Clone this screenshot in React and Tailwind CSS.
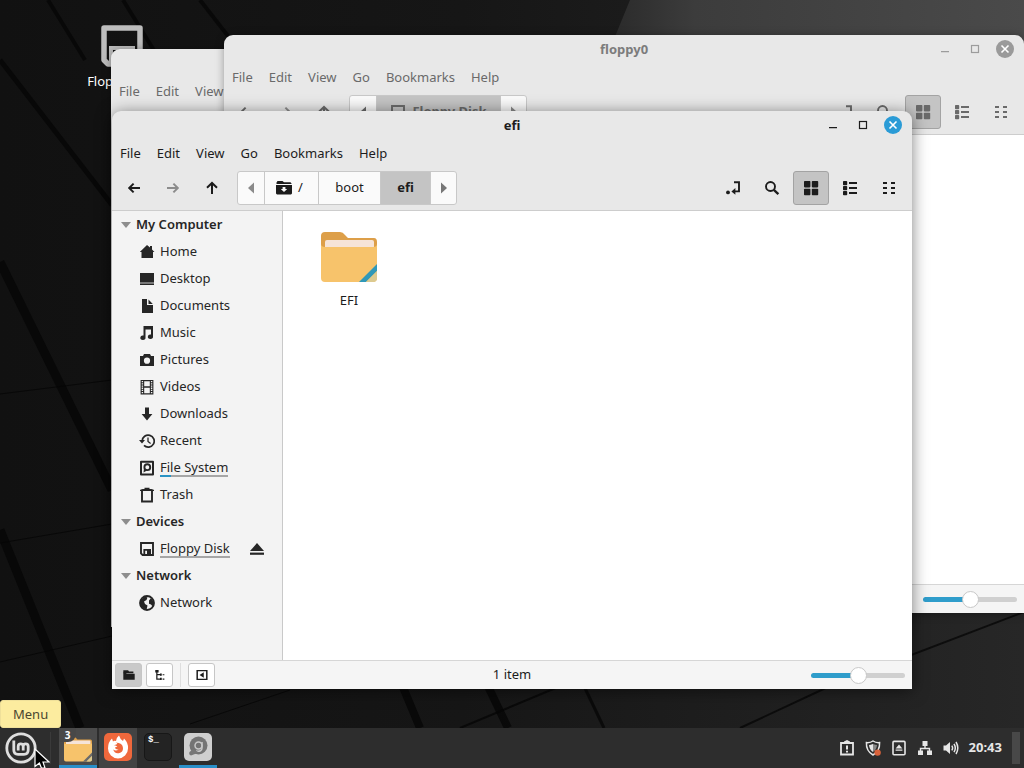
import React from "react";

const SvgIcon = ({ children, className = "h-4 w-4" }) => (
  <svg viewBox="0 0 16 16" className={className} fill="currentColor" aria-hidden="true">
    {children}
  </svg>
);

const stroke = { fill: "none", stroke: "currentColor", strokeWidth: 2 };

const icons = {
  home: <path d="M8 1 L0.8 8 H2.5 V14 H14 V8 H15.5 L13 5.4 V2 H11 V3.6 Z" />,
  desktop: (
    <>
      <path d="M1 2 H15 V11.6 H1 Z" />
      <path d="M1 12.4 H15 V14 H1 Z" />
    </>
  ),
  document: <path d="M3 1 H8 V7 H14 V15 H3 Z M9.5 1.5 L13.8 6 H9.5 Z" />,
  music: (
    <path d="M4.5 1 H14 V11.5 A2.6 2.2 0 1 1 12 9.6 V4.5 H6.5 V12.5 A2.6 2.2 0 1 1 4.5 10.6 Z" />
  ),
  pictures: (
    <path
      fillRule="evenodd"
      d="M5 2 H11 L12 4 H15 V14 H1 V4 H4 Z M8 5.6 A3.1 3.1 0 1 0 8 11.8 A3.1 3.1 0 1 0 8 5.6 Z"
    />
  ),
  videos: (
    <>
      <path fillRule="evenodd" d="M1.6 1 H14.4 V15.5 H1.6 Z M5.2 2.2 V7.3 H10.8 V2.2 Z M5.2 8.7 V14.2 H10.8 V8.7 Z" />
      <path d="M3.4 2 V15 M12.6 2 V15" fill="none" stroke="#f3f3f3" strokeWidth="1.4" strokeDasharray="1.3 .9" />
    </>
  ),
  downloads: <path d="M6 1.5 H10 V8 H13.4 L8 14.5 L2.6 8 H6 Z" />,
  recent: (
    <>
      <path d="M3.2 8 A6 6 0 1 1 5 12.4" {...stroke} strokeWidth="1.7" />
      <path d="M0 7 H6 L3 10.6 Z" />
      <path d="M9 4.5 V8.4 L11.6 10.4" {...stroke} strokeWidth="1.3" />
    </>
  ),
  filesystem: (
    <>
      <path d="M2 1.8 H14 V14.6 H2 Z" {...stroke} strokeLinejoin="round" />
      <circle cx="8.3" cy="7.2" r="2.9" {...stroke} strokeWidth="1.9" />
      <path d="M4.5 12.5 L5 8.5 L8 10.5 Z" />
    </>
  ),
  trash: (
    <>
      <path d="M1 3 C2.5 1.2 13.5 1.2 15 3 V4 H1 Z M5.5 0.8 H10.5 V2.4 H5.5 Z" />
      <path d="M3 4 V14.5 H13 V4" {...stroke} strokeWidth="1.9" />
    </>
  ),
  floppy: (
    <>
      <path d="M2 2 H14 V14 H3.6 L2 12.4 Z" {...stroke} strokeWidth="1.9" />
      <path fillRule="evenodd" d="M4.4 8 H12 V14 H4.4 Z M6.2 9.8 V13 H8 V9.8 Z" />
    </>
  ),
  network: (
    <>
      <circle cx="8" cy="8" r="7" {...stroke} strokeWidth="1.8" />
      <path d="M2 5 L6 1.5 L8.5 2.5 L7.5 5 L5 6.5 L6 9 L8.5 10.5 L7.5 15 L3.5 13 L1 9 Z" />
      <path d="M10 5.5 L12 3 L15 7 L13.6 11.5 L12 9.5 L10 8.8 Z" />
    </>
  ),
  eject: (
    <>
      <path d="M8 2 L15 10 H1 Z" />
      <path d="M1 11.6 H15 V13.8 H1 Z" />
    </>
  ),
  arrowLeft: <path d="M14 8 H3.2 M7.6 3.6 L3.2 8 L7.6 12.4" {...stroke} />,
  arrowRight: <path d="M2 8 H12.8 M8.4 3.6 L12.8 8 L8.4 12.4" {...stroke} />,
  arrowUp: <path d="M8 14 V3.2 M3 7.8 L8 3 L13 7.8" {...stroke} />,
  rootFolder: (
    <path
      fillRule="evenodd"
      d="M0.5 2.5 L1.5 1 H6.5 L8 2.2 H14.5 L15.5 3.4 V4 H0.5 Z M0 5 H16 V13.5 L15 14.5 H1 L0 13.5 Z M6.6 7 V9 H4.8 L8 12 L11.2 9 H9.4 V7 Z"
    />
  ),
  location: (
    <>
      <path d="M9 2.2 H14 V11.4 H9" {...stroke} strokeWidth="1.9" />
      <path d="M10.4 8 L6.4 11.4 L10.4 14.8 Z" />
      <circle cx="3" cy="12.4" r="1.9" />
    </>
  ),
  search: (
    <>
      <circle cx="6.5" cy="6.5" r="4.5" {...stroke} strokeWidth="1.9" />
      <path d="M9.8 9.8 L14.4 14.2" {...stroke} strokeWidth="2.3" />
    </>
  ),
  grid: (
    <>
      <rect x="1" y="1" width="6.4" height="6.4" rx=".8" />
      <rect x="8.8" y="1" width="6.4" height="6.4" rx=".8" />
      <rect x="1" y="8.8" width="6.4" height="6.4" rx=".8" />
      <rect x="8.8" y="8.8" width="6.4" height="6.4" rx=".8" />
    </>
  ),
  list: (
    <>
      <rect x="1" y="1" width="4.2" height="4.2" rx=".8" />
      <rect x="1" y="6" width="4.2" height="4.2" rx=".8" />
      <rect x="1" y="11" width="4.2" height="4.2" rx=".8" />
      <path d="M7 2 H15 V4 H7 Z M7 7 H15 V9 H7 Z M7 12 H15 V14 H7 Z" />
    </>
  ),
  compact: (
    <path d="M2 2 H6 V4 H2 Z M2 7 H6 V9 H2 Z M2 12 H6 V14 H2 Z M10 2 H14 V4 H10 Z M10 7 H14 V9 H10 Z M10 12 H14 V14 H10 Z" />
  ),
  triLeft: <path d="M11 2.5 V13.5 L5 8 Z" />,
  triRight: <path d="M5 2.5 V13.5 L11 8 Z" />,
  places: (
    <>
      <path d="M1.5 2.5 H7 L8 4 H13 V6 H1.5 Z" />
      <path d="M1.5 5 H5 V6.6 H14.5 V13.5 H1.5 Z" />
    </>
  ),
  tree: (
    <>
      <path d="M4.4 2.5 V12.6 H9 M4.4 7.6 H9" {...stroke} strokeWidth="1.4" />
      <path d="M2.6 2.4 H6.4 V5 H2.6 Z M8 6.4 H10 V8.8 H8 Z M11 7 H13 V8.4 H11 Z M8 11.2 H10 V13.8 H8 Z M11 12 H13 V13.4 H11 Z" />
    </>
  ),
  hideSide: (
    <>
      <path d="M2.5 3 H13.5 V13 H2.5 Z" {...stroke} strokeWidth="1.7" />
      <path d="M5.2 8 L10 4.8 V11.2 Z" />
    </>
  ),
};

const Icon = ({ name, className }) => <SvgIcon className={className}>{icons[name]}</SvgIcon>;

const MENUS = ["File", "Edit", "View", "Go", "Bookmarks", "Help"];

const PLACES = [
  {
    title: "My Computer",
    items: [
      { icon: "home", label: "Home" },
      { icon: "desktop", label: "Desktop" },
      { icon: "document", label: "Documents" },
      { icon: "music", label: "Music" },
      { icon: "pictures", label: "Pictures" },
      { icon: "videos", label: "Videos" },
      { icon: "downloads", label: "Downloads" },
      { icon: "recent", label: "Recent" },
      { icon: "filesystem", label: "File System", usage: true },
      { icon: "trash", label: "Trash" },
    ],
  },
  {
    title: "Devices",
    items: [{ icon: "floppy", label: "Floppy Disk", mounted: true }],
  },
  { title: "Network", items: [{ icon: "network", label: "Network" }] },
];

function ToolButton({ icon, label, pressed, muted }) {
  return (
    <button
      type="button"
      aria-label={label}
      className={`flex h-[34px] w-9 items-center justify-center rounded-[3px] border ${
        pressed ? "border-[#a3a3a3] bg-[#c4c4c4]" : "border-transparent"
      } ${muted ? "text-[#8c8c8c]" : ""}`}
    >
      <Icon name={icon} />
    </button>
  );
}

function TitleBar({ title, active }) {
  return (
    <header className="grid h-7 grid-cols-[1fr_auto_1fr] items-center px-[10px]">
      <h2 className={`col-start-2 text-[13px] leading-5 font-bold ${active ? "" : "text-[#7c7c7c]"}`}>{title}</h2>
      <div className={`col-start-3 flex items-center justify-end gap-3 ${active ? "" : "text-[#9c9c9c]"}`}>
        <button type="button" aria-label="Minimize" className="flex h-[18px] w-[18px] items-center justify-center">
          <SvgIcon>
            <path d="M4 10 H12 V11.2 H4 Z" />
          </SvgIcon>
        </button>
        <button type="button" aria-label="Maximize" className="flex h-[18px] w-[18px] items-center justify-center">
          <SvgIcon>
            <rect x="4.5" y="4.5" width="7" height="7" fill="none" stroke="currentColor" strokeWidth="1.2" />
          </SvgIcon>
        </button>
        <button
          type="button"
          aria-label="Close"
          className={`flex h-[18px] w-[18px] items-center justify-center rounded-full text-white ${
            active ? "bg-[#2a9bd6]" : "bg-[#9a9a9a]"
          }`}
        >
          <SvgIcon>
            <path d="M4.5 4.5 L11.5 11.5 M11.5 4.5 L4.5 11.5" fill="none" stroke="currentColor" strokeWidth="1.6" />
          </SvgIcon>
        </button>
      </div>
    </header>
  );
}

function MenuBar({ menus }) {
  return (
    <nav className="flex h-7 items-center gap-4 px-2">
      {menus.map((m) => (
        <button key={m} type="button" className="text-[13px] leading-5">
          {m}
        </button>
      ))}
    </nav>
  );
}

function ToolBar({ children }) {
  return (
    <div className="flex h-11 items-center border-b border-[#cdcdcd] pr-[5px] pb-px pl-1">
      <div className="flex gap-[3px]">
        <ToolButton icon="arrowLeft" label="Back" />
        <ToolButton icon="arrowRight" label="Forward" muted />
        <ToolButton icon="arrowUp" label="Up" />
      </div>
      <div className="ml-[7px] flex h-[34px] divide-x divide-[#c8c8c8] overflow-hidden rounded-[3px] border border-[#c8c8c8] bg-[#fafafa] text-[13px]">
        {children}
      </div>
      <div className="ml-auto flex gap-[3px]">
        <ToolButton icon="location" label="Toggle location entry" />
        <ToolButton icon="search" label="Search" />
        <ToolButton icon="grid" label="Icon view" pressed />
        <ToolButton icon="list" label="List view" />
        <ToolButton icon="compact" label="Compact view" />
      </div>
    </div>
  );
}

function Crumb({ label, className = "", current, children }) {
  return (
    <button
      type="button"
      aria-label={label}
      className={`flex items-center justify-center gap-[6px] ${current ? "bg-[#c4c4c4] font-bold" : ""} ${className}`}
    >
      {children}
    </button>
  );
}

function Sidebar() {
  return (
    <aside className="w-[171px] shrink-0 border-r border-[#c9c9c9] bg-[#f3f3f3] text-[13px] leading-[19px] text-[#262626]">
      {PLACES.map((group) => (
        <section key={group.title}>
          <h3 className="flex h-[27px] items-center gap-1 pl-2 font-semibold">
            <svg viewBox="0 0 12 12" className="h-3 w-3 text-[#8d8d8d]" fill="currentColor" aria-hidden="true">
              <path d="M1 3 H11 L6 9 Z" />
            </svg>
            {group.title}
          </h3>
          <ul>
            {group.items.map((item) => (
              <li key={item.label} className="flex h-[27px] items-center justify-between pr-[17px] pl-[27px]">
                <button type="button" className="flex items-center gap-[5px]">
                  <Icon name={item.icon} />
                  <span className="flex flex-col">
                    <span className={item.usage || item.mounted ? "leading-4" : "leading-[19px]"}>{item.label}</span>
                    {item.usage && (
                      <span className="flex h-[2px] bg-[#a6a6a6]">
                        <span className="w-[11px] bg-[#2a93c4]" />
                      </span>
                    )}
                    {item.mounted && <span className="h-[2px] bg-[#a6a6a6]" />}
                  </span>
                </button>
                {item.mounted && (
                  <button type="button" aria-label="Eject">
                    <Icon name="eject" />
                  </button>
                )}
              </li>
            ))}
          </ul>
        </section>
      ))}
    </aside>
  );
}

function ZoomSlider() {
  return (
    <input
      type="range"
      aria-label="Zoom"
      defaultValue="50"
      className="h-[18px] w-[94px] cursor-pointer appearance-none bg-transparent [&::-webkit-slider-runnable-track]:h-[5px] [&::-webkit-slider-runnable-track]:rounded-full [&::-webkit-slider-runnable-track]:bg-[linear-gradient(90deg,#2f9dcb_50%,#d0d0d0_50%)] [&::-webkit-slider-thumb]:mt-[-6px] [&::-webkit-slider-thumb]:h-[17px] [&::-webkit-slider-thumb]:w-[17px] [&::-webkit-slider-thumb]:appearance-none [&::-webkit-slider-thumb]:rounded-full [&::-webkit-slider-thumb]:border [&::-webkit-slider-thumb]:border-[#c8c8c8] [&::-webkit-slider-thumb]:bg-white"
    />
  );
}

function StatusButton({ icon, label, pressed }) {
  return (
    <button
      type="button"
      aria-label={label}
      className={`flex h-6 w-[27px] items-center justify-center rounded-[3px] border border-[#c6c6c6] ${
        pressed ? "bg-[#c9c9c9]" : "bg-white"
      }`}
    >
      <Icon name={icon} className="h-[14px] w-[14px]" />
    </button>
  );
}

function Window({ title, active, className, menus = MENUS, crumbs, children }) {
  return (
    <section
      className={`absolute flex h-[578px] w-[800px] flex-col overflow-hidden rounded-t-[9px] bg-[#e8e8e8] ${
        active ? "text-[#1c1c1c] shadow-[0_2px_16px_rgba(0,0,0,0.5)]" : "text-[#6a6a6a] shadow-[0_1px_8px_rgba(0,0,0,0.35)]"
      } ${className}`}
    >
      <TitleBar title={title} active={active} />
      <MenuBar menus={menus} />
      {crumbs && <ToolBar>{crumbs}</ToolBar>}
      {children}
    </section>
  );
}

function Folder({ className, band = "#3098b8" }) {
  return (
    <svg viewBox="0 0 58 52" className={className} aria-hidden="true">
      <path d="M1 5 Q1 1 5 1 H20 Q23 1 25 4 L28 7 H54 Q57 7 57 11 V22 H1 Z" fill="#dd9f49" />
      <rect x="5" y="9" width="49" height="12" rx="2" fill="#f6e4d8" />
      <path d="M1 13 Q1 16 5 16 H53 Q57 16 57 13 V47 Q57 51 53 51 H5 Q1 51 1 47 Z" fill="#f7c36b" />
      <path d="M57 33 V40 L46 51 H39 Z" fill={band} />
      <path d="M57 40 V47 Q57 51 53 51 H46 Z" fill="#dcca90" />
    </svg>
  );
}

function Wallpaper() {
  return (
    <svg viewBox="0 0 1024 768" preserveAspectRatio="xMidYMid slice" className="absolute inset-0 h-full w-full" aria-hidden="true">
      <defs>
        <linearGradient id="base" x1="0" y1="0" x2="1" y2="0">
          <stop offset="0" stopColor="#111111" />
          <stop offset=".45" stopColor="#161616" />
          <stop offset="1" stopColor="#272727" />
        </linearGradient>
        <linearGradient id="beam" x1="0" y1="0" x2="1" y2="0">
          <stop offset="0" stopColor="#252525" />
          <stop offset=".25" stopColor="#3c3c3c" />
          <stop offset="1" stopColor="#4a4a4a" />
        </linearGradient>
      </defs>
      <rect width="1024" height="768" fill="url(#base)" />
      <path d="M630 0 H1024 V110 H585 Z" fill="url(#beam)" />
      <g stroke="#060606" strokeOpacity=".75" fill="none">
        <path d="M0 60 L112 205" strokeWidth="5" />
        <path d="M0 262 L112 490" strokeWidth="9" />
        <path d="M0 530 L80 728" strokeWidth="9" />
        <path d="M48 0 L85 60 M123 0 L155 52 M200 0 L228 36" strokeWidth="4" />
        <path d="M400 680 L420 728 M485 680 L508 728" strokeWidth="8" />
        <path d="M583 684 L604 728" strokeWidth="3" />
        <path d="M460 728 L570 682 M740 728 L830 686 L1024 612" strokeWidth="2" />
        <path d="M0 394 L112 380 M0 543 L112 524 M0 662 L112 636 M190 724 L290 690" strokeWidth="1" />
      </g>
    </svg>
  );
}

function TaskItem({ label, className = "", running, children }) {
  return (
    <button
      type="button"
      aria-label={label}
      className={`flex h-10 w-[38px] items-center justify-center border-b-[3px] ${
        running ? "border-[#2a8fc9]" : "border-transparent"
      } ${className}`}
    >
      {children}
    </button>
  );
}

function Taskbar() {
  return (
    <footer className="relative flex h-10 shrink-0 items-center bg-[#2d2d2d] text-white">
      <button type="button" aria-label="Menu" className="flex h-10 w-[42px] items-center justify-center">
        <svg viewBox="0 0 32 32" className="h-8 w-8" fill="none" stroke="#dedede" aria-hidden="true">
          <circle cx="16" cy="16" r="14.2" strokeWidth="2.8" />
          <path d="M8.8 8.5 V18 Q8.8 22.3 13 22.3 H19 Q23.2 22.3 23.2 18 V14.5 Q23.2 11.8 20.7 11.8 Q18.2 11.8 18.2 14.5 V18.5 M18.2 14.5 Q18.2 11.8 15.7 11.8 Q13.2 11.8 13.2 14.5 V18.5" strokeWidth="2.8" />
        </svg>
      </button>
      <span className="mr-2 ml-2 h-8 w-px bg-[#3a3a3a]" />
      <div className="flex gap-[2px]">
        <TaskItem label="Files" running className="relative bg-[#4b4b4b]">
          <Folder className="mt-1 h-[26px] w-[30px]" band="#6b6b6b" />
          <span className="absolute top-0 left-0 flex h-[14px] w-[17px] items-center justify-center rounded-br-lg bg-[#484848] text-[10px] leading-3 font-bold">
            3
          </span>
        </TaskItem>
        <TaskItem label="Firefox" className="bg-[#434343]">
          <svg viewBox="0 0 28 28" className="h-7 w-7" aria-hidden="true">
            <rect width="28" height="28" rx="5" fill="#f0683c" />
            <path d="M15 2.5 Q16 6 19 8 L20 5.5 Q24.5 10 24 15.5 A10 10 0 0 1 4 15.5 Q4 9 8 5.5 L9 8.5 Q10 7.5 12 8 Q12 5 15 2.5 Z" fill="#fff" />
            <path d="M9.6 12 Q12.6 12.4 13.4 10.6 Q12.6 9.6 11.6 9.4 Q18.8 9.6 19 15 A5 5 0 0 1 9.2 16.6 Q12 18.6 14.6 16.4 Q11.4 16.4 11 14.4 L13.4 13.4 Q11.4 12.4 9.6 12 Z" fill="#f0683c" />
          </svg>
        </TaskItem>
        <TaskItem label="Terminal">
          <span className="flex h-7 w-7 items-start rounded-[5px] border border-[#171717] bg-[#232323] px-[3px] font-['Liberation_Mono',monospace] text-[9px] leading-3 font-bold">
            $_
          </span>
        </TaskItem>
        <TaskItem label="Disks" running>
          <svg viewBox="0 0 28 28" className="h-7 w-7" aria-hidden="true">
            <rect width="28" height="28" rx="5" fill="#cfcfcf" />
            <circle cx="14.5" cy="12.5" r="9" fill="#747474" />
            <circle cx="14.5" cy="12.5" r="3.5" fill="none" stroke="#c8c8c8" strokeWidth="1.5" />
            <path d="M18 9 V15 Q18 19 12 18" fill="none" stroke="#c8c8c8" strokeWidth="1.5" />
            <path d="M5.5 19 L9 16 L15 19.5 L7 22.5 Q4.5 21.5 5.5 19 Z" fill="#777" />
          </svg>
        </TaskItem>
      </div>
      <div className="ml-auto flex h-10 items-center gap-[10px] pr-1 text-[#e6e6e6]">
        <button type="button" aria-label="Report">
          <SvgIcon>
            <path d="M2 3 H14 V14.5 H2 Z" {...stroke} strokeWidth="1.8" />
            <path d="M5 1.6 L8 0 L11 1.6 V4 H5 Z M7 5.5 H9 V9.6 H7 Z M7 10.8 H9 V12.6 H7 Z" />
          </SvgIcon>
        </button>
        <button type="button" aria-label="Updates">
          <SvgIcon>
            <path d="M8 1 Q11 3 14.6 2.6 Q15 11 8 15 Q1 11 1.4 2.6 Q5 3 8 1 Z" {...stroke} strokeWidth="1.5" />
            <path d="M8 4 Q5.5 5 4 5 Q4.3 9.6 8 12 Z" />
            <path d="M8 4 Q10.5 5 12 5 Q11.7 9.6 8 12 Z" fill="#888" />
            <circle cx="12.6" cy="12.6" r="3.2" fill="#d9633c" />
          </SvgIcon>
        </button>
        <button type="button" aria-label="Removable drives">
          <SvgIcon>
            <rect x="2" y="1.4" width="12" height="13.4" rx="1" {...stroke} strokeWidth="1.6" />
            <path d="M8 4.6 L11.4 8.4 H4.6 Z M4.6 9.4 H11.4 V10.8 H4.6 Z" />
          </SvgIcon>
        </button>
        <button type="button" aria-label="Network">
          <SvgIcon>
            <path d="M5.5 1 H10.5 V6 H5.5 Z M1 10.5 H6 V15 H1 Z M10 10.5 H15 V15 H10 Z" />
            <path d="M8 5 V8.5 M3.5 11 V8.5 H12.5 V11" {...stroke} strokeWidth="1.4" />
          </SvgIcon>
        </button>
        <button type="button" aria-label="Volume">
          <SvgIcon>
            <path d="M0.5 5.5 H3 L7 2 V14 L3 10.5 H0.5 Z" />
            <path d="M8.8 5.6 Q10.4 8 8.8 10.4 M11 3.8 Q13.6 8 11 12.2 M13 2 Q16.6 8 13 14" {...stroke} strokeWidth="1.5" />
          </SvgIcon>
        </button>
        <time className="text-[13px] font-bold">20:43</time>
        <span className="h-8 w-2 bg-[#484848]" />
      </div>
      <div className="absolute bottom-full left-0 rounded-[3px] border border-[#efe09a] bg-[#fcec9f] px-3 py-[3px] text-[13px] leading-5 text-[#4a4630]">
        Menu
      </div>
      <svg viewBox="0 0 16 20" className="absolute bottom-0 left-[34px] h-5 w-4" aria-hidden="true">
        <path d="M1 1 V18.5 L5.4 15 L7.4 20 H11 L9 14 H15 Z" fill="#000" stroke="#fff" strokeWidth="1.2" />
      </svg>
    </footer>
  );
}

export default function App() {
  return (
    <div className="relative flex h-screen flex-col overflow-hidden bg-[#151515] font-['Noto_Sans',sans-serif]">
      <Wallpaper />
      <main className="relative flex-1">
        <button type="button" className="absolute top-6 left-[72px] flex w-[100px] flex-col items-center gap-[3px] text-[13px] leading-5 text-white">
          <svg viewBox="0 0 44 44" className="h-11 w-11" fill="none" stroke="#bdbdbd" aria-hidden="true">
            <path d="M4 4 H40 V40 H8 L4 36 Z" strokeWidth="5.5" strokeLinejoin="round" />
            <path d="M11 40 V24 H33 V40" strokeWidth="4" />
          </svg>
          Floppy Disk
        </button>

        <Window title="" menus={MENUS.slice(0, 3)} className="top-[49px] left-[111px]" />

        <Window
          title="floppy0"
          className="top-[35px] left-[224px]"
          crumbs={
            <>
              <Crumb label="Scroll left" className="w-[27px]">
                <Icon name="triLeft" />
              </Crumb>
              <Crumb current className="w-[124px]">
                <Icon name="floppy" />
                Floppy Disk
              </Crumb>
              <Crumb label="Scroll right" className="w-[25px] text-[#8a8a8a]">
                <Icon name="triRight" />
              </Crumb>
            </>
          }
        >
          <div className="flex-1 bg-white" />
          <div className="flex h-[29px] items-center justify-end border-t border-[#d6d6d6] bg-[#f5f5f5] pr-[7px]">
            <ZoomSlider />
          </div>
        </Window>

        <Window
          title="efi"
          active
          className="top-[111px] left-[112px]"
          crumbs={
            <>
              <Crumb label="Scroll left" className="w-[27px] text-[#8a8a8a]">
                <Icon name="triLeft" />
              </Crumb>
              <Crumb className="w-[54px] pr-1">
                <Icon name="rootFolder" />/
              </Crumb>
              <Crumb className="w-[62px]">boot</Crumb>
              <Crumb current className="w-[50px]">
                efi
              </Crumb>
              <Crumb label="Scroll right" className="w-[25px] text-[#777]">
                <Icon name="triRight" />
              </Crumb>
            </>
          }
        >
          <div className="flex min-h-0 flex-1">
            <Sidebar />
            <div className="flex flex-1 items-start bg-white px-4 py-5">
              <button type="button" className="flex w-[100px] flex-col items-center gap-[7px] text-[13px] leading-5">
                <Folder className="h-[52px] w-[58px]" />
                EFI
              </button>
            </div>
          </div>
          <div className="grid h-[29px] grid-cols-[1fr_auto_1fr] items-center border-t border-[#d6d6d6] bg-[#f5f5f5] px-[3px] text-[13px]">
            <div className="flex items-center gap-1">
              <StatusButton icon="places" label="Show places" pressed />
              <StatusButton icon="tree" label="Show tree" />
              <span className="mx-[3px] h-6 w-px bg-[#dedede]" />
              <StatusButton icon="hideSide" label="Hide sidebar" />
            </div>
            <span>1 item</span>
            <div className="flex justify-end pr-1">
              <ZoomSlider />
            </div>
          </div>
        </Window>
      </main>
      <Taskbar />
    </div>
  );
}
